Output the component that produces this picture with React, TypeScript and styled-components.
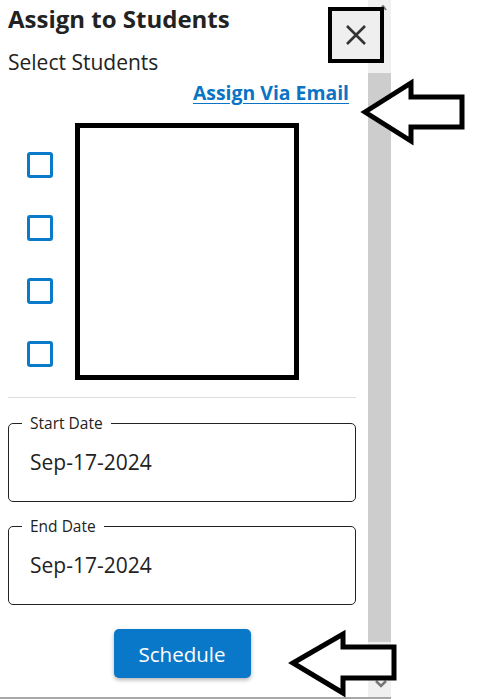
import React from 'react';
import styled, { createGlobalStyle } from 'styled-components';

const GlobalStyle = createGlobalStyle`
  html, body {
    margin: 0;
    padding: 0;
    background: #fff;
    font-family: 'Open Sans', 'Noto Sans', sans-serif;
    color: #222;
  }
`;

const Page = styled.div`
  position: relative;
  width: 495px;
  height: 699px;
  overflow: hidden;
`;

const Panel = styled.div`
  display: flex;
  width: 391px;
  height: 697px;
  border-bottom: 2px solid #a8a8a8;
`;

const Content = styled.div`
  flex: 1;
  display: flex;
  flex-direction: column;
  padding: 0 12px 0 8px;
`;

const Title = styled.h2`
  margin: 3px 0 0;
  font-size: 24px;
  line-height: 32px;
  font-weight: 700;
  color: #222;
`;

const Subtitle = styled.div`
  margin-top: 13px;
  font-size: 21px;
  line-height: 28px;
  color: #222;
`;

const LinkRow = styled.div`
  display: flex;
  justify-content: flex-end;
  padding-right: 7px;
  margin-top: 5px;
`;

const EmailLink = styled.a`
  font-size: 19.4px;
  line-height: 24px;
  font-weight: 700;
  color: #0a74c4;
  text-decoration: underline;
  text-underline-offset: 3px;
`;

const StudentsRow = styled.div`
  display: flex;
  gap: 22px;
  margin-top: 18px;
  padding-left: 19px;
`;

const CheckColumn = styled.div`
  display: flex;
  flex-direction: column;
  gap: 37px;
  padding-top: 29px;
`;

const Checkbox = styled.span`
  width: 20px;
  height: 20px;
  border: 3px solid #0a7acb;
  border-radius: 3px;
`;

const NamesBox = styled.div`
  width: 214px;
  height: 247px;
  border: 5px solid #000;
`;

const Divider = styled.hr`
  margin: 17px 0 0;
  border: none;
  border-top: 1px solid #ddd;
`;

const DateField = styled.fieldset<{ $top: number }>`
  box-sizing: border-box;
  margin: ${(p) => p.$top}px 0 0;
  padding: 0 0 0 21px;
  height: 88px;
  border: 1px solid #222;
  border-radius: 5px;
`;

const Legend = styled.legend`
  padding: 0 8px;
  margin-left: -8px;
  font-size: 15.5px;
  line-height: 18px;
  color: #222;
`;

const DateValue = styled.div`
  margin-top: 16px;
  font-size: 21px;
  line-height: 28px;
  color: #222;
`;

const ButtonRow = styled.div`
  display: flex;
  justify-content: center;
  margin-top: 24px;
`;

const ScheduleButton = styled.button`
  width: 137px;
  height: 49px;
  border: none;
  border-radius: 5px;
  background: #0a78c8;
  color: #fff;
  font-family: 'Open Sans', 'Noto Sans', sans-serif;
  font-size: 20.5px;
  box-shadow: 0 2px 4px rgba(0, 0, 0, 0.3);
`;

const Scrollbar = styled.div`
  width: 23px;
  display: flex;
  flex-direction: column;
  align-items: center;
  background: #f0f0f0;
`;

const ScrollArrow = styled.div<{ $top?: number }>`
  height: 16px;
  width: 100%;
  margin-top: ${(p) => p.$top ?? 0}px;
  display: flex;
  align-items: center;
  justify-content: flex-end;
  padding-right: 4px;
  box-sizing: border-box;
`;

const Thumb = styled.div`
  width: 100%;
  margin-top: 57px;
  height: 569px;
  background: #cdcdcd;
`;

const CloseButton = styled.button`
  position: absolute;
  left: 328px;
  top: 7px;
  width: 56px;
  height: 56px;
  box-sizing: border-box;
  border: 4px solid #000;
  background: #efefef;
  display: flex;
  align-items: center;
  justify-content: center;
  padding: 0;
`;

const Arrow = styled.svg`
  position: absolute;
  overflow: visible;
`;

const dates = [
  { label: 'Start Date', value: 'Sep-17-2024', top: 16 },
  { label: 'End Date', value: 'Sep-17-2024', top: 15 },
];

const App = () => {
  return (
    <Page>
      <GlobalStyle />
      <Panel>
        <Content>
          <Title>Assign to Students</Title>
          <Subtitle>Select Students</Subtitle>
          <LinkRow>
            <EmailLink href="#">Assign Via Email</EmailLink>
          </LinkRow>
          <StudentsRow>
            <CheckColumn>
              {[0, 1, 2, 3].map((i) => (
                <Checkbox key={i} />
              ))}
            </CheckColumn>
            <NamesBox />
          </StudentsRow>
          <Divider />
          {dates.map((d) => (
            <DateField key={d.label} $top={d.top}>
              <Legend>{d.label}</Legend>
              <DateValue>{d.value}</DateValue>
            </DateField>
          ))}
          <ButtonRow>
            <ScheduleButton>Schedule</ScheduleButton>
          </ButtonRow>
        </Content>
        <Scrollbar>
          <ScrollArrow>
            <svg width="8" height="6" viewBox="0 0 8 6">
              <path d="M1 5 L4 1 L7 5" fill="none" stroke="#777" strokeWidth="2" />
            </svg>
          </ScrollArrow>
          <Thumb />
          <ScrollArrow $top={34}>
            <svg width="12" height="8" viewBox="0 0 12 8">
              <path d="M1 1 L6 6 L11 1" fill="none" stroke="#777" strokeWidth="2.5" />
            </svg>
          </ScrollArrow>
        </Scrollbar>
      </Panel>
      <CloseButton aria-label="Close">
        <svg width="22" height="22" viewBox="0 0 22 22">
          <path d="M2 2 L20 20 M20 2 L2 20" stroke="#333" strokeWidth="2.6" />
        </svg>
      </CloseButton>
      <Arrow width="100" height="62" style={{ left: 363, top: 81 }}>
        <path
          d="M2 31 L48 2 L48 16 L99 16 L99 46 L48 46 L48 60 Z"
          fill="#fff"
          stroke="#000"
          strokeWidth="5"
          strokeLinejoin="miter"
        />
      </Arrow>
      <Arrow width="104" height="62" style={{ left: 291, top: 633 }}>
        <path
          d="M2 30 L52 1 L52 14 L103 14 L103 45 L52 45 L52 60 Z"
          fill="#fff"
          stroke="#000"
          strokeWidth="5"
          strokeLinejoin="miter"
        />
      </Arrow>
    </Page>
  );
};

export default App;
